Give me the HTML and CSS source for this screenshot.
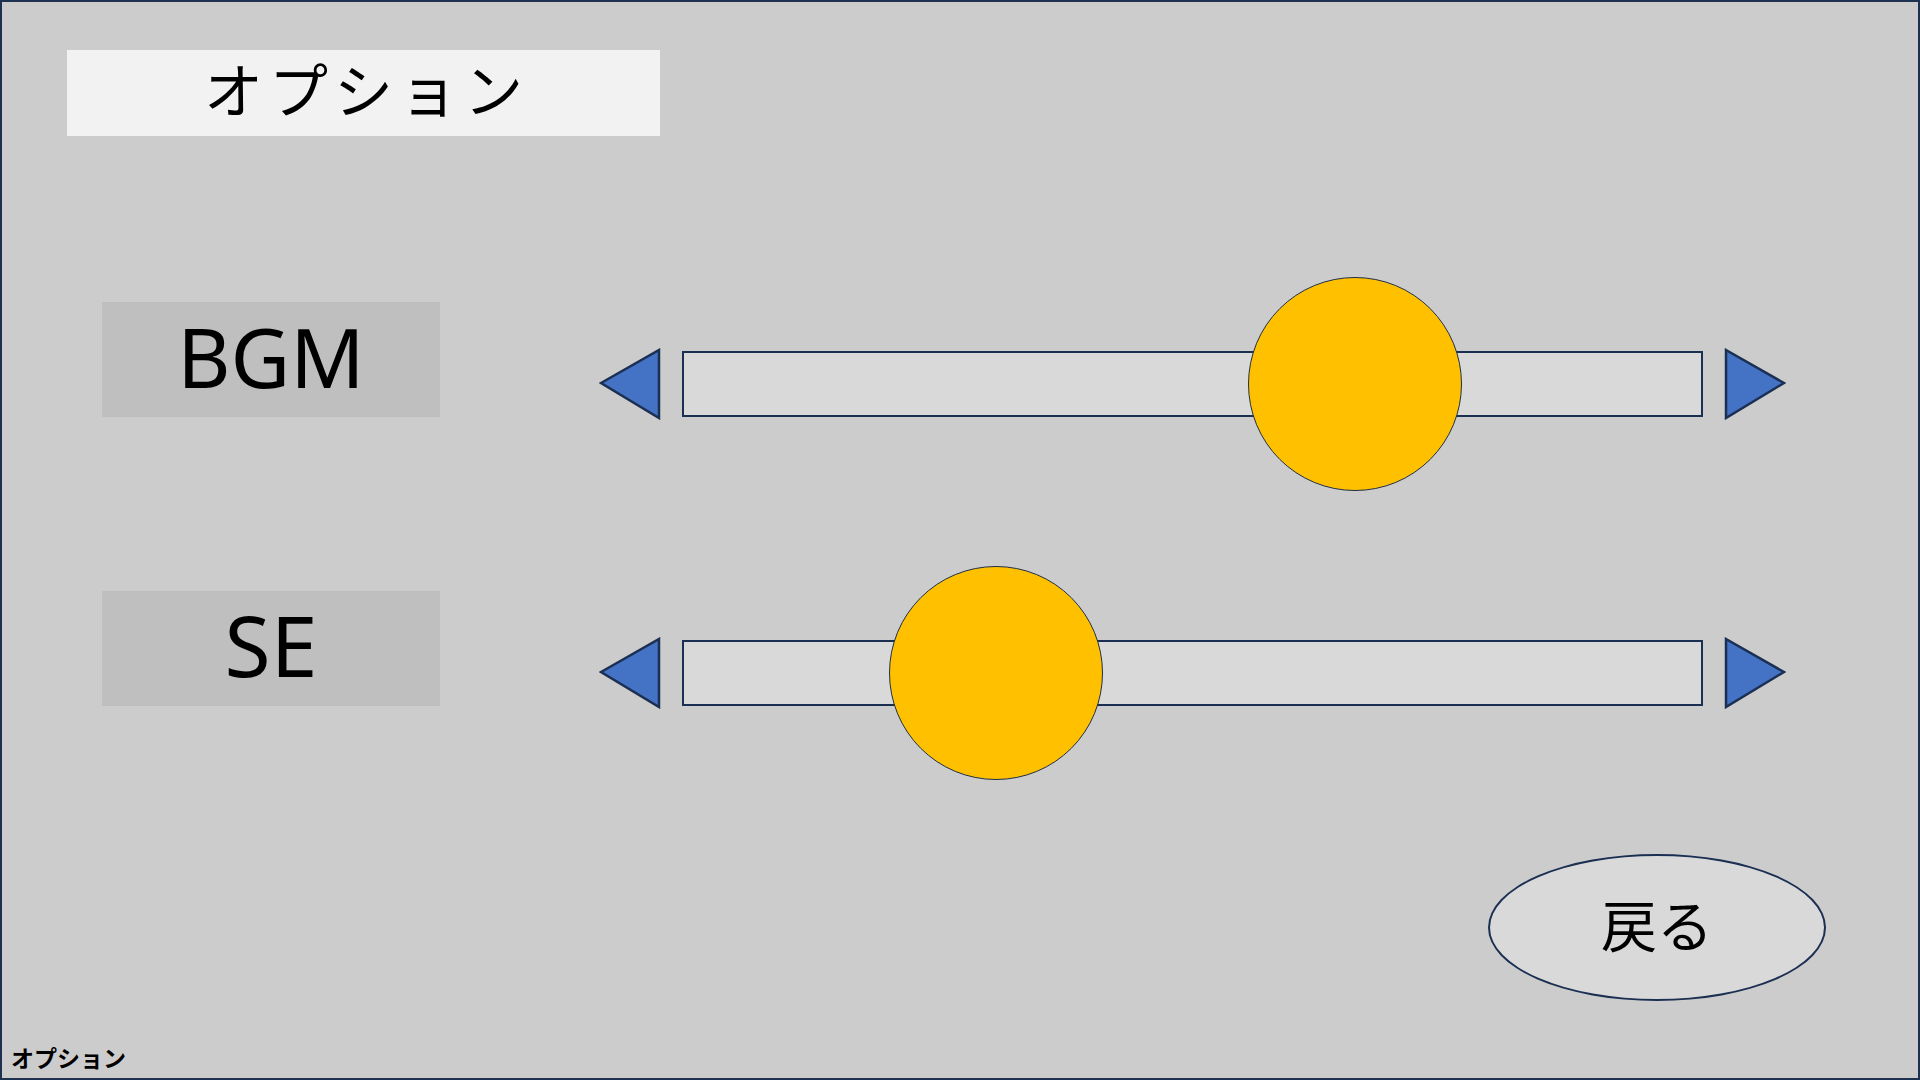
FILE: index.html
```html
<!DOCTYPE html>
<html lang="ja">
<head>
<meta charset="utf-8">
<title>オプション</title>
<link rel="stylesheet" href="styles.css">
</head>
<body>
<div class="screen">
  <div class="title-box"><span class="title-text">オプション</span></div>

  <div class="row row-bgm">
    <div class="label"><span>BGM</span></div>
    <div class="slider">
      <svg class="arrow" width="62" height="72" viewBox="0 0 62 72"><polygon points="2,35 60,2 60,70" /></svg>
      <div class="track">
        <div class="knob" style="left: 564px;"></div>
      </div>
      <svg class="arrow" width="62" height="72" viewBox="0 0 62 72"><polygon points="2,2 60,35 2,70" /></svg>
    </div>
  </div>

  <div class="row row-se">
    <div class="label"><span>SE</span></div>
    <div class="slider">
      <svg class="arrow" width="62" height="72" viewBox="0 0 62 72"><polygon points="2,35 60,2 60,70" /></svg>
      <div class="track">
        <div class="knob" style="left: 205px;"></div>
      </div>
      <svg class="arrow" width="62" height="72" viewBox="0 0 62 72"><polygon points="2,2 60,35 2,70" /></svg>
    </div>
  </div>

  <div class="footer">
    <div class="back-btn"><span>戻る</span></div>
  </div>

  <div class="page-name">オプション</div>
</div>
</body>
</html>
```

FILE: styles.css
```css
html, body {
  margin: 0;
  padding: 0;
}

body {
  width: 1920px;
  height: 1080px;
  overflow: hidden;
  font-family: "Noto Sans CJK JP", "Noto Sans", sans-serif;
}

.screen {
  box-sizing: border-box;
  width: 1920px;
  height: 1080px;
  background: #cccccc;
  border: 2px solid #1f3150;
  display: flex;
  flex-direction: column;
}

.title-box {
  margin-top: 48px;
  margin-left: 65px;
  width: 593px;
  height: 86px;
  background: #f2f2f2;
  display: flex;
  align-items: center;
  justify-content: center;
}

.title-text {
  font-family: "Noto Sans CJK JP", sans-serif;
  font-weight: 400;
  font-size: 59px;
  letter-spacing: 6px;
  margin-right: -6px;
  color: #000;
  line-height: 1;
  position: relative;
  top: -6px;
}

.row {
  display: flex;
  align-items: flex-start;
}

.row-bgm {
  margin-top: 141px;
}

.row-se {
  margin-top: 75px;
}

.label {
  margin-top: 25px;
  margin-left: 100px;
  width: 338px;
  height: 115px;
  background: #bfbfbf;
  display: flex;
  align-items: center;
  justify-content: center;
}

.label span {
  font-family: "Noto Sans", sans-serif;
  font-size: 82px;
  line-height: 1;
  color: #000;
  position: relative;
  top: -4px;
}

.row-se .label span {
  font-size: 84px;
}

.slider {
  margin-left: 159px;
  height: 214px;
  display: flex;
  align-items: center;
}

.arrow {
  display: block;
}

.arrow polygon {
  fill: #4472c4;
  stroke: #1b2f52;
  stroke-width: 2.5;
  stroke-linejoin: miter;
}

.track {
  position: relative;
  box-sizing: border-box;
  width: 1021px;
  height: 66px;
  margin: 0 21px;
  background: #d9d9d9;
  border: 2px solid #1b2f52;
}

.knob {
  position: absolute;
  top: 50%;
  width: 214px;
  height: 214px;
  box-sizing: border-box;
  margin-top: -107px;
  border-radius: 50%;
  background: #ffc000;
  border: 1.5px solid #1f2f48;
}

.footer {
  display: flex;
  justify-content: flex-end;
  margin-top: 74px;
  padding-right: 92px;
}

.back-btn {
  box-sizing: border-box;
  width: 338px;
  height: 147px;
  border-radius: 50%;
  background: #d9d9d9;
  border: 2px solid #1b2f52;
  display: flex;
  align-items: center;
  justify-content: center;
}

.back-btn span {
  font-family: "Noto Sans CJK JP", sans-serif;
  font-weight: 400;
  font-size: 56px;
  line-height: 1;
  color: #000;
  position: relative;
  top: -5px;
}

.page-name {
  margin-top: auto;
  margin-left: 9px;
  margin-bottom: 8px;
  font-family: "Noto Sans CJK JP", sans-serif;
  font-weight: 700;
  font-size: 23px;
  line-height: 26px;
  color: #000;
}
```
